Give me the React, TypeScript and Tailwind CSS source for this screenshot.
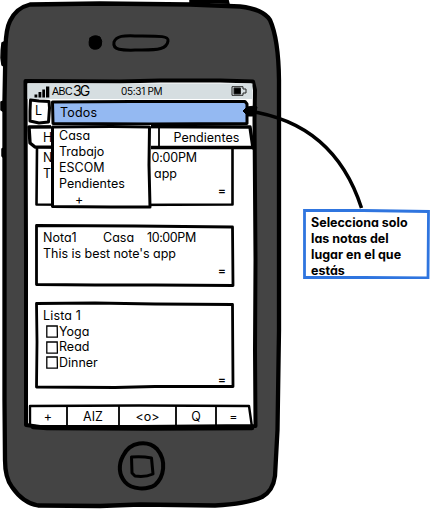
import React from "react";

const ink = "font-['Inter','Open_Sans',sans-serif] [font-feature-settings:'cv11','ss03'] text-[12.5px] leading-4 text-black whitespace-nowrap";

/* Hand-inked rectangle outline stretched over its parent. */
function Sketch({ w, h, d, fill = "none", sw = 3 }: { w: number; h: number; d: string; fill?: string; sw?: number }) {
  return (
    <svg className="absolute inset-0 h-full w-full overflow-visible" viewBox={`0 0 ${w} ${h}`} fill={fill} stroke="#000" strokeWidth={sw} strokeLinejoin="round" strokeLinecap="round">
      <path d={d} />
    </svg>
  );
}

function Check({ label }: { label: string }) {
  return (
    <div className="flex h-[15.5px] items-center">
      <svg className="mr-[1px] h-[13px] w-[12px] shrink-0" viewBox="0 0 12 13" fill="none" stroke="#000" strokeWidth="1.3">
        <path d="M.8 1L11.2 .8L11.4 12.2L.8 12Z" />
      </svg>
      <span>{label}</span>
    </div>
  );
}

function PhoneBody() {
  return (
    <svg className="absolute left-0 top-0" width="290" height="510" viewBox="0 0 290 510" fill="none" stroke="#000" strokeLinecap="round" strokeLinejoin="round">
      <path d="M190 3L190 0L228 0L229 4" fill="#000" strokeWidth="1.5" />
      <path d="M4 42L2 43Q1 50 1 58L2 65L4 66M4 101L1 102L1 110L4 112M4 148L2 149L2 156L4 158" fill="#000" strokeWidth="1.5" />
      <path d="M30 4.5Q16 8 10 21Q6 29 5.500 47L4.500 100L4.500 180L4.500 300L4.500 400L5 460Q5 478 12 487Q23 503 38 505.500L100 506L140 504.500L215 505.500Q246 504 262 497Q273 491 275 476L277.500 430L279 330L279 180L279 80Q278.500 39 270 20Q263 9 240 6.500L190 4.500L100 3.500Z" fill="#444" strokeWidth="4.3" />
      <path d="M90 38Q94 34 100 37Q103 41 101 46Q99 50 93 49Q87 47 90 38Z" fill="#000" strokeWidth="1" />
      <path d="M114 42C117 34 128 36 142 36C160 36 169 36 168 41C167 49 158 50 142 50C126 50 112 52 114 42Z" strokeWidth="3" />
      <path d="M25.500 81L120 81.500L160 80.500L220 80.500L253 81.500L255 90L254.500 120L255.500 260L255 350L255.500 426L140 427L40 427L26 425L26 250Z" fill="#fff" strokeWidth="4" />
      <path d="M27.500 83.500L252.500 83.500L252.500 99L27.500 99Z" fill="#d6dee1" stroke="none" />
      <path d="M123 456C130 441 148 440 157 449C167 461 164 477 155 485C147 490 132 490 125 482C119 475 118 465 123 456Z" strokeWidth="4" />
      <path d="M131.500 457Q142 456 151.500 458L153 474Q145 477.500 135 476L132 473Z" strokeWidth="3" />
    </svg>
  );
}

export default function App() {
  return (
    <main className={`relative flex h-[510px] w-[430px] overflow-hidden bg-white ${ink}`}>
      <PhoneBody />

      <div className="relative flex h-[430px] w-[256px] flex-col pt-[83px] pl-[27px]">
        <header className="flex h-[16px] items-center text-[10.5px]">
          <svg className="ml-[7px] h-[13px] w-[16px]" viewBox="0 0 16 13">
            <path d="M.5 9.500H3.300V12.500H.5ZM4.500 7H7.300V12.500H4.500ZM8.300 4.500H11V12.500H8.300ZM12 1.500H15.300V12.500H12Z" />
          </svg>
          <span className="ml-[2px] w-[20px] font-['Liberation_Sans',sans-serif] text-[10.5px] tracking-[-0.5px]">ABC</span>
          <span className="w-[49px] pl-px font-['Inter',sans-serif] text-[14px] leading-4 tracking-[-1.8px]">3G</span>
          <span className="w-[83px] font-['Inter',sans-serif] text-[10px] tracking-[-0.3px]">05:31 PM</span>
          <svg className="ml-[27px] h-[10px] w-[17px] shrink-0" viewBox="0 0 17 10" fill="none" stroke="#222">
            <path d="M1 .7H12V3H15V7H12V9.300H1Z" strokeWidth="1" />
            <path d="M3 2H9.500V8H3Z" fill="#000" strokeWidth="1" />
          </svg>
        </header>

        <div className="flex h-[26px] pl-[2px]">
          <div className="relative h-[24px] w-[21px] pt-[4px] pl-[6px]">
            <Sketch w={21} h={24} d="M1.500 1L10 2L20 2.500L20.500 9L19.500 23L10 24L1 22L1 12Z" />
            <span className="relative">L</span>
          </div>
          <div className="relative mt-[2px] ml-[1px] h-[25px] w-[199px] pt-[4px] pl-[9px]">
            <Sketch w={199} h={25} fill="#94b9f2" d="M1.500 1L80 .5L194 .5L196 3L196 22.500L100 23L2 22.500Z" />
            <span className="relative tracking-[0.2px]">Todos</span>
          </div>
        </div>

        <nav className="relative flex h-[25px] w-[226px] pt-[5px] pl-[16px]">
          <Sketch w={226} h={25} d="M2 2L100 1.500L223 2L226 23M2 2L3 18L8 22L100 22.500L225 22.500" sw={3.4} />
          <Sketch w={226} h={25} d="M132 2L132 21" sw={1.8} />
          <span className="w-[130.5px]">H</span>
          <span>Pendientes</span>
        </nav>

        <div className="flex h-[255px] flex-col pl-[8px]">
          <section className="relative -mt-[2px] h-[59px] w-[199px] pt-[1.5px] pl-[8px]">
            <Sketch w={199} h={59} d="M2 0L1.500 56.500L80 57L197.500 56.500L197.500 0" sw={2.6} />
            <div className="flex">
              <span className="w-[108.5px]">N</span>
              <span className="tracking-[-0.2px]">0:00PM</span>
            </div>
            <div className="flex">
              <span className="w-[111px]">T</span>
              <span>app</span>
            </div>
            <span className="absolute right-[8px] bottom-[8px] font-medium">=</span>
          </section>

          <section className="relative mt-[17px] h-[63px] w-[199px] pt-[6px] pl-[8px]">
            <Sketch w={199} h={63} d="M1.500 1.500L100 2L197.500 3L198 61.500L120 61L60 61L1.500 60.500Z" sw={2.8} />
            <div className="flex">
              <span className="w-[60px]">Nota1</span>
              <span className="w-[44px]">Casa</span>
              <span className="tracking-[-0.4px]">10:00PM</span>
            </div>
            <p className="tracking-[-0.03px]">This is best note&apos;s app</p>
            <span className="absolute right-[8px] bottom-[8px] font-medium">=</span>
          </section>

          <section className="relative mt-[15px] h-[87px] w-[199px] pt-[6px] pl-[8px]">
            <Sketch w={199} h={87} d="M1.500 1.500L60 1L120 2L197.500 2.500L198 84.500L120 84.500L80 85.500L1.500 85L2 40Z" sw={2.8} />
            <h2 className="tracking-[0.15px]">Lista 1</h2>
            <div className="pl-[3px]">
              <Check label="Yoga" />
              <Check label="Read" />
              <Check label="Dinner" />
            </div>
            <span className="absolute right-[8px] bottom-[1.5px] font-medium">=</span>
          </section>
        </div>

        <footer className="relative ml-[2px] grid h-[25px] w-[222px] grid-cols-[38px_52px_57px_40px_35px] pt-[4px] text-center">
          <Sketch w={222} h={25} d="M1 1L110 .5L220 1L223 22M1 1L1 19" sw={2.4} />
          <Sketch w={222} h={25} d="M4 22L18 23L120 23.500L223 23" sw={4.5} />
          <Sketch w={222} h={25} d="M38 1L38 21M90 1L90 21M147 1L147 21M187 1L187 21" sw={1.8} />
          <span className="relative">+</span>
          <span className="relative">AIZ</span>
          <span className="relative">&lt;o&gt;</span>
          <span className="relative">Q</span>
          <span className="relative">=</span>
        </footer>
      </div>

      <ul className="absolute top-[125px] left-[51px] h-[83px] w-[100px] bg-white pt-[3px] pl-[8px]">
        <Sketch w={100} h={83} d="M1.500 2L60 1.500L98.500 2L98 40L99 82L60 82L1.500 81.500Z" sw={3} />
        <li className="relative">Casa</li>
        <li className="relative">Trabajo</li>
        <li className="relative">ESCOM</li>
        <li className="relative">Pendientes</li>
        <li className="relative pl-[16px]">+</li>
      </ul>

      <aside className="relative mt-[209px] ml-[47px] h-[70px] w-[127px] pt-[6px] pl-[8px] font-bold">
        <svg className="absolute inset-0" width="127" height="70" viewBox="0 0 127 70" fill="none">
          <path d="M1.500 1.500L60 1.500L125.500 2.500L125 69L60 68.500L1.500 68.500Z" stroke="#2f75df" strokeWidth="2.8" />
        </svg>
        <p className="relative w-[112px] whitespace-normal">Selecciona solo<br />las notas del<br />lugar en el que<br />estás</p>
      </aside>

      <svg className="absolute top-[95px] left-[235px]" width="135" height="120" viewBox="0 0 135 120" fill="none" stroke="#000">
        <path d="M13 16Q99 28 126.500 113" strokeWidth="3.5" />
        <path d="M8 16L12 12L20 11L22 12L21 16L20 21L13 21Z" fill="#000" strokeWidth="1" />
      </svg>
    </main>
  );
}
